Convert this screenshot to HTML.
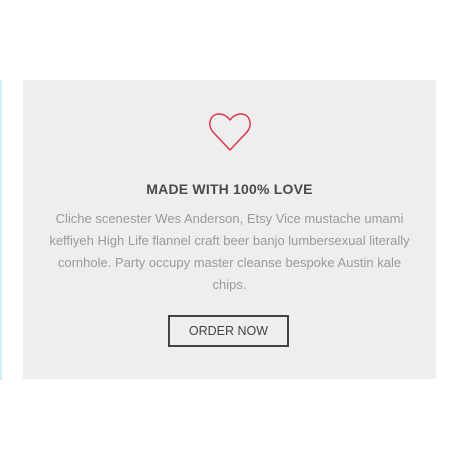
<!DOCTYPE html>
<html><head><style>
body{margin:0;width:460px;height:460px;background:#fff;position:relative;overflow:hidden;font-family:"Liberation Sans",sans-serif}
.line{position:absolute;left:0;top:80px;width:2px;height:300px;background:#cdeff3}
.box{position:absolute;left:23px;top:80px;width:413px;height:299px;background:#eeeeee}
.h{position:absolute;left:0;width:413px;top:101px;text-align:center;font-size:14px;font-weight:bold;color:#4a4a4a;letter-spacing:0.2px}
.p{position:absolute;left:0;width:413px;top:128px;text-align:center;font-size:13px;line-height:22px;color:#9a9a9a;white-space:nowrap}
.btn{position:absolute;left:145px;top:235px;width:117px;height:28px;border:2px solid #444;text-align:center;line-height:28px;font-size:12.5px;color:#444}
</style></head><body>
<div class="line"></div>
<div class="box">
<svg style="position:absolute;left:185px;top:32px" width="44" height="40" viewBox="0 0 44 40"><path d="M22 38 L5 20 C-1 13 2 2 11 2 C16 2 20 5 22 8 C24 5 28 2 33 2 C42 2 45 13 39 20 Z" fill="none" stroke="#d9364a" stroke-width="1.5" stroke-linejoin="round"/></svg>
<div class="h">MADE WITH 100% LOVE</div>
<div class="p">Cliche scenester Wes Anderson, Etsy Vice mustache umami<br>keffiyeh High Life flannel craft beer banjo lumbersexual literally<br>cornhole. Party occupy master cleanse bespoke Austin kale<br>chips.</div>
<div class="btn">ORDER NOW</div>
</div>
</body></html>
